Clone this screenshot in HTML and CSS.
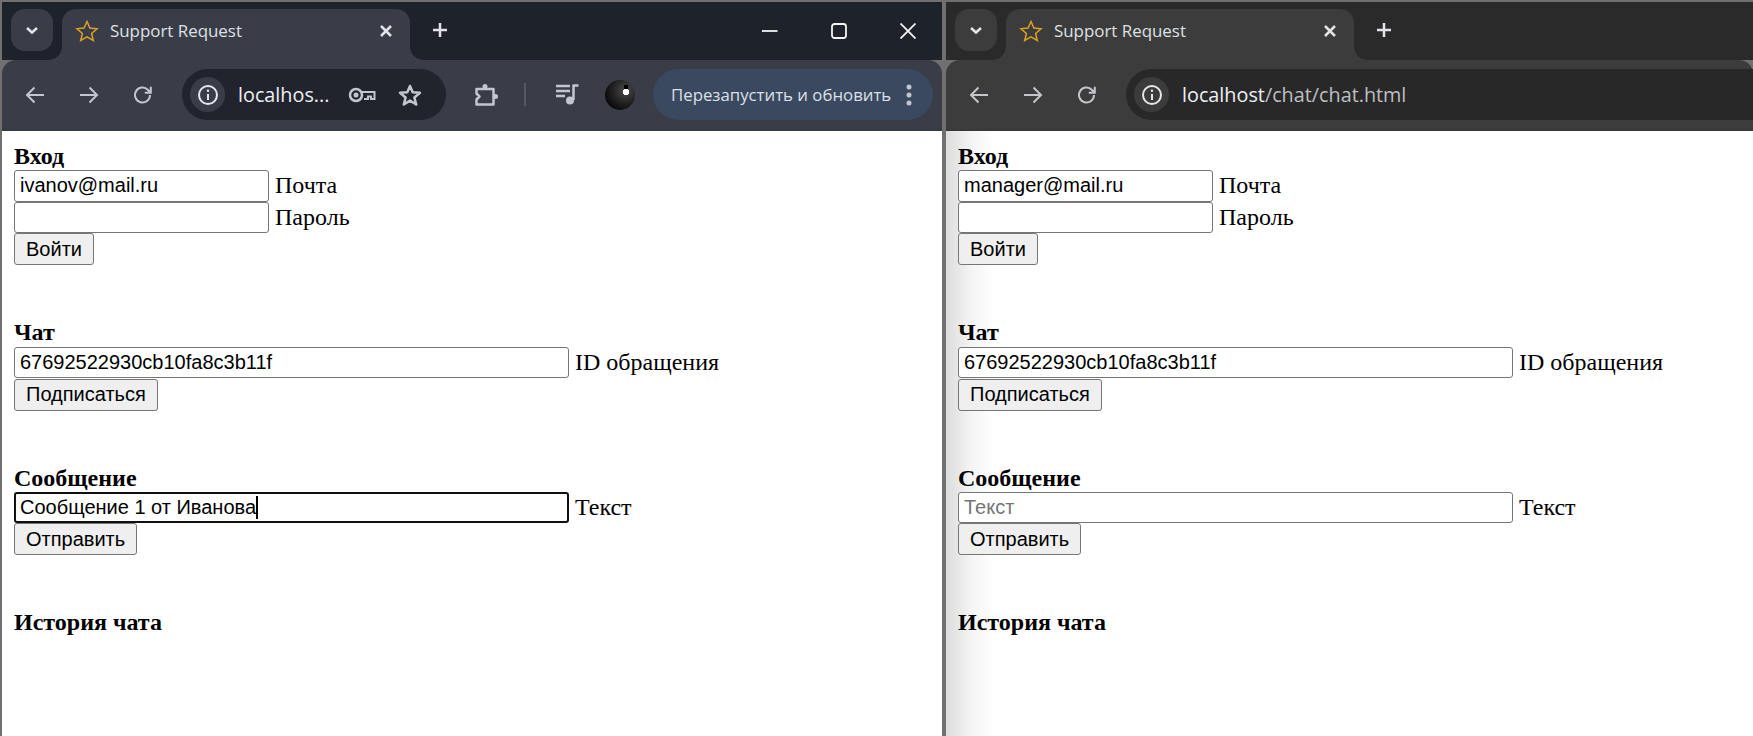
FILE: index.html
```html
<!DOCTYPE html>
<html lang="ru">
<head>
<meta charset="utf-8">
<title>Support Request</title>
<link rel="stylesheet" href="styles.css">
</head>
<body>
<div class="desktop">
  <section class="window window-blue">
    <header class="tabstrip">
      <div class="tabsearch"><svg width="14" height="14" viewBox="0 0 14 14"><path d="M2 5 7 9.5 12 5" class="ic-bold"/></svg></div>
      <div class="tab">
        <svg class="fav" width="24" height="24" viewBox="0 0 24 24"><path d="M12 2.5 14.9 9.1 22 9.8 16.6 14.5 18.3 21.5 12 17.8 5.7 21.5 7.4 14.5 2 9.8 9.1 9.1Z"/></svg>
        <span class="tabtitle">Support Request</span>
        <svg class="tabclose" width="14" height="14" viewBox="0 0 14 14"><path d="M2 2 12 12M12 2 2 12" class="ic-bold"/></svg>
      </div>
      <svg class="newtab" width="16" height="16" viewBox="0 0 16 16"><path d="M8 1V15M1 8H15" class="ic-bold"/></svg>
      <div class="wincontrols">
        <svg width="16" height="16" viewBox="0 0 16 16"><path d="M0 8H15.5" class="ic-win"/></svg>
        <svg width="16" height="16" viewBox="0 0 16 16"><rect x="1" y="1" width="14" height="14" rx="2.5" class="ic-win"/></svg>
        <svg width="16" height="16" viewBox="0 0 16 16"><path d="M0.5 0.5 15.5 15.5M15.5 0.5 0.5 15.5" class="ic-win"/></svg>
      </div>
    </header>
    <nav class="toolbar">
      <div class="tbtn"><svg width="20" height="20" viewBox="0 0 20 20"><path d="M19 10H2M9.5 2.5 2 10 9.5 17.5" class="ic"/></svg></div>
      <div class="tbtn"><svg width="20" height="20" viewBox="0 0 20 20"><path d="M1 10H18M10.5 2.5 18 10 10.5 17.5" class="ic"/></svg></div>
      <div class="tbtn"><svg width="20" height="20" viewBox="0 0 20 20"><path d="M17 10A7.5 7.5 0 1 1 14.8 4.7L17.5 7.5M17.8 1.8V7.8H11.8" class="ic"/></svg></div>
      <div class="omnibox omnibox-short">
        <div class="infobtn"><svg width="20" height="20" viewBox="0 0 20 20"><circle cx="10" cy="10" r="9" class="ic-light"/><path d="M10 9V15" class="ic-light"/><circle cx="10" cy="5.8" r="1.2" class="dot"/></svg></div>
        <span class="url url-cut">localhos...</span>
        <svg class="keyicon" width="28" height="16" viewBox="0 0 28 16"><circle cx="8" cy="8" r="6" class="ic-thick"/><circle cx="8" cy="8" r="2.5" class="dot-gray"/><path d="M14 5H26.5V12H23V9.5H20V12H16" class="ic"/></svg>
        <svg class="staricon" width="24" height="24" viewBox="0 0 24 24"><path d="M12 3 14.7 9.3 22 9.8 16.4 14.5 18.2 21.5 12 17.6 5.8 21.5 7.6 14.5 2 9.8 9.3 9.3Z" class="ic-thick"/></svg>
      </div>
      <div class="tbtn ext"><svg width="24" height="24" viewBox="0 0 24 24"><path d="M2.5 6H19.5V21.5H2.5V16.5L5.5 13.5 2.5 10.5Z" class="ic-thick"/><circle cx="11" cy="3.5" r="2.5" class="dot-gray"/><circle cx="21.5" cy="13.5" r="2.5" class="dot-gray"/></svg></div>
      <div class="sep"></div>
      <div class="tbtn media"><svg width="24" height="24" viewBox="0 0 24 24"><path d="M1 3H15M1 8H15M1 13H10" class="ic-thick"/><path d="M18.5 17V2.5H23.5" class="ic-thick"/><circle cx="15" cy="17.5" r="4" class="dot-gray"/></svg></div>
      <div class="avatarbox"><div class="avatar"></div></div>
      <div class="update">
        <span class="updatetext">Перезапустить и обновить</span>
        <svg width="8" height="24" viewBox="0 0 8 24"><circle cx="4" cy="4" r="2.5" class="dot-gray"/><circle cx="4" cy="12" r="2.5" class="dot-gray"/><circle cx="4" cy="20" r="2.5" class="dot-gray"/></svg>
      </div>
    </nav>
    <main class="page">
      <h3 class="heading">Вход</h3>
      <div class="row"><input class="field short" type="text" value="ivanov@mail.ru"><span class="label">Почта</span></div>
      <div class="row"><input class="field short" type="password"><span class="label">Пароль</span></div>
      <button class="btn" type="button">Войти</button>
      <h3 class="heading spaced">Чат</h3>
      <div class="row row-tall"><input class="field long" type="text" value="67692522930cb10fa8c3b11f"><span class="label">ID обращения</span></div>
      <button class="btn" type="button">Подписаться</button>
      <h3 class="heading spaced">Сообщение</h3>
      <div class="row"><div class="field long focused">Сообщение 1 от Иванова<span class="caret"></span></div><span class="label">Текст</span></div>
      <button class="btn" type="button">Отправить</button>
      <h3 class="heading spaced">История чата</h3>
    </main>
  </section>

  <section class="window window-gray">
    <header class="tabstrip">
      <div class="tabsearch"><svg width="14" height="14" viewBox="0 0 14 14"><path d="M2 5 7 9.5 12 5" class="ic-bold"/></svg></div>
      <div class="tab">
        <svg class="fav" width="24" height="24" viewBox="0 0 24 24"><path d="M12 2.5 14.9 9.1 22 9.8 16.6 14.5 18.3 21.5 12 17.8 5.7 21.5 7.4 14.5 2 9.8 9.1 9.1Z"/></svg>
        <span class="tabtitle">Support Request</span>
        <svg class="tabclose" width="14" height="14" viewBox="0 0 14 14"><path d="M2 2 12 12M12 2 2 12" class="ic-bold"/></svg>
      </div>
      <svg class="newtab" width="16" height="16" viewBox="0 0 16 16"><path d="M8 1V15M1 8H15" class="ic-bold"/></svg>
    </header>
    <nav class="toolbar">
      <div class="tbtn"><svg width="20" height="20" viewBox="0 0 20 20"><path d="M19 10H2M9.5 2.5 2 10 9.5 17.5" class="ic"/></svg></div>
      <div class="tbtn"><svg width="20" height="20" viewBox="0 0 20 20"><path d="M1 10H18M10.5 2.5 18 10 10.5 17.5" class="ic"/></svg></div>
      <div class="tbtn"><svg width="20" height="20" viewBox="0 0 20 20"><path d="M17 10A7.5 7.5 0 1 1 14.8 4.7L17.5 7.5M17.8 1.8V7.8H11.8" class="ic"/></svg></div>
      <div class="omnibox omnibox-wide">
        <div class="infobtn"><svg width="20" height="20" viewBox="0 0 20 20"><circle cx="10" cy="10" r="9" class="ic-light"/><path d="M10 9V15" class="ic-light"/><circle cx="10" cy="5.8" r="1.2" class="dot"/></svg></div>
        <span class="url">localhost<span class="urlpath">/chat/chat.html</span></span>
      </div>
    </nav>
    <main class="page">
      <h3 class="heading">Вход</h3>
      <div class="row"><input class="field short" type="text" value="manager@mail.ru"><span class="label">Почта</span></div>
      <div class="row"><input class="field short" type="password"><span class="label">Пароль</span></div>
      <button class="btn" type="button">Войти</button>
      <h3 class="heading spaced">Чат</h3>
      <div class="row row-tall"><input class="field long" type="text" value="67692522930cb10fa8c3b11f"><span class="label">ID обращения</span></div>
      <button class="btn" type="button">Подписаться</button>
      <h3 class="heading spaced">Сообщение</h3>
      <div class="row"><input class="field long" type="text" placeholder="Текст"><span class="label">Текст</span></div>
      <button class="btn" type="button">Отправить</button>
      <h3 class="heading spaced">История чата</h3>
    </main>
  </section>
</div>
</body>
</html>
```

FILE: styles.css
```css
* { box-sizing: border-box; }
html, body { margin: 0; height: 100%; overflow: hidden; }
body { background: #707070; }

.desktop {
  display: flex;
  height: 736px;
  padding-top: 2px;
  background: #707070;
}
.window {
  display: flex;
  flex-direction: column;
  min-width: 0;
  overflow: hidden;
}
.window-blue {
  --strip: #1e222b;
  --bar: #3a3d47;
  --omni: #22242d;
  width: 940px;
  margin-left: 2px;
  margin-right: 4px;
}
.window-gray {
  --strip: #2a2a2a;
  --bar: #3c3c3c;
  --omni: #282828;
  flex: 1;
}

/* tab strip */
.tabstrip {
  display: flex;
  align-items: flex-start;
  height: 58px;
  flex: none;
  padding: 7px 0 0 9px;
  background: var(--strip);
}
.tabsearch {
  display: flex;
  align-items: center;
  justify-content: center;
  width: 42px;
  height: 42px;
  border-radius: 14px;
  background: var(--bar);
}
.tab {
  position: relative;
  display: flex;
  align-items: center;
  width: 348px;
  height: 51px;
  margin-left: 9px;
  padding: 0 17px 8px 13px;
  border-radius: 14px 14px 0 0;
  background: var(--bar);
}
.tab::before,
.tab::after {
  content: "";
  position: absolute;
  bottom: 0;
  width: 13px;
  height: 13px;
}
.tab::before {
  left: -13px;
  background: radial-gradient(circle at 0 0, transparent 12.5px, var(--bar) 13px);
}
.tab::after {
  right: -13px;
  background: radial-gradient(circle at 100% 0, transparent 12.5px, var(--bar) 13px);
}
.fav { fill: none; stroke: #dba126; stroke-width: 1.5; flex: none; }
.tabtitle {
  flex: 1;
  margin-left: 11px;
  font: 16.9px "Open Sans", sans-serif;
  color: #dfe1e6;
  white-space: nowrap;
}
.newtab { margin: 13px 0 0 22px; flex: none; }
.wincontrols {
  display: flex;
  gap: 53px;
  margin-left: auto;
  margin-top: 14px;
  padding-right: 26px;
}
.wincontrols svg { display: block; }

/* icon strokes */
.ic-bold { fill: none; stroke: #e3e4e8; stroke-width: 2.5; }
.ic-win { fill: none; stroke: #f4f4f4; stroke-width: 1.8; }
.ic { fill: none; stroke: #c4c6ce; stroke-width: 2; }
.ic-thick { fill: none; stroke: #c4c6ce; stroke-width: 2.5; stroke-linejoin: round; }
.ic-light { fill: none; stroke: #e6e7ea; stroke-width: 2; }
.dot { fill: #e6e7ea; }
.dot-gray { fill: #c4c6ce; }

/* toolbar */
.toolbar {
  display: flex;
  align-items: center;
  flex: none;
  height: 71px;
  padding: 0 0 2px 6px;
  border-radius: 14px 14px 0 0;
  background: var(--bar);
  box-shadow: inset 0 -2px 0 rgba(0, 0, 0, 0.05);
}
.tbtn {
  display: flex;
  align-items: center;
  justify-content: center;
  width: 54px;
  flex: none;
}
.omnibox {
  display: flex;
  align-items: center;
  flex: none;
  height: 51px;
  margin-left: 12px;
  padding-left: 8px;
  border-radius: 26px;
  background: var(--omni);
}
.omnibox-short { width: 264px; }
.omnibox-wide { width: 640px; border-radius: 26px 0 0 26px; }
.infobtn {
  display: flex;
  align-items: center;
  justify-content: center;
  flex: none;
  width: 35px;
  height: 35px;
  border-radius: 50%;
  background: var(--bar);
}
.url {
  margin-left: 13px;
  font: 19.8px "Open Sans", sans-serif;
  color: #eef0f4;
  white-space: nowrap;
}
.url-cut { width: 110px; flex: none; overflow: hidden; }
.urlpath { color: #bdbfc4; }
.keyicon { flex: none; }
.staricon { margin-left: 22px; flex: none; }
.ext { margin-left: 13px; }
.sep {
  width: 2px;
  height: 23px;
  margin-left: 11px;
  flex: none;
  background: #555862;
}
.media { margin-left: 14px; }
.avatarbox {
  display: flex;
  justify-content: center;
  width: 52px;
  flex: none;
}
.avatar {
  width: 30px;
  height: 30px;
  border-radius: 50%;
  background:
    radial-gradient(circle 3.5px at 21px 12px, #fff 85%, transparent 100%),
    radial-gradient(circle 2.5px at 21px 7px, #000 85%, transparent 100%),
    radial-gradient(circle at 68% 35%, #4c4c4c 0, #262626 40%, #0a0a0a 75%, #000 100%);
}
.update {
  display: flex;
  align-items: center;
  flex: none;
  width: 280px;
  height: 51px;
  margin-left: 7px;
  padding-left: 18px;
  border-radius: 26px;
  background: #3a4860;
}
.updatetext {
  width: 234px;
  font: 16.8px "Open Sans", sans-serif;
  color: #dde0e8;
  white-space: nowrap;
}

/* page */
.page {
  flex: 1;
  padding: 12px 0 0 12px;
  background: #fff;
  color: #000;
  font: 24px/27px "Liberation Serif", serif;
}
.window-gray .page {
  background: linear-gradient(to right, #dcdcdc 0, #f4f4f4 25px, #fff 48px);
}
.heading {
  margin: 0;
  font: bold 24px/27px "Liberation Serif", serif;
}
.spaced { margin-top: 54px; }
.row {
  display: flex;
  align-items: center;
  height: 31.67px;
}
.row-tall { height: 32.5px; }
.label { margin-left: 6px; white-space: nowrap; }
.field {
  display: block;
  height: 31.67px;
  padding: 0 5px;
  border: 1px solid #767676;
  border-radius: 3px;
  background: #fff;
  color: #000;
  font: 20px "Liberation Sans", sans-serif;
  line-height: 29px;
  outline: none;
  flex: none;
  white-space: nowrap;
}
.field::placeholder { color: #757575; opacity: 1; }
.short { width: 255px; }
.long { width: 555px; }
.focused {
  border: 2px solid #101010;
  padding: 0 4px;
  line-height: 27px;
}
.caret {
  display: inline-block;
  width: 0;
  height: 23px;
  border-left: 2px solid #000;
  vertical-align: -5px;
}
.btn {
  display: block;
  height: 32px;
  padding: 0 11px;
  border: 1px solid #767676;
  border-radius: 3px;
  background: #efefef;
  color: #000;
  font: 20px "Liberation Sans", sans-serif;
}
```
